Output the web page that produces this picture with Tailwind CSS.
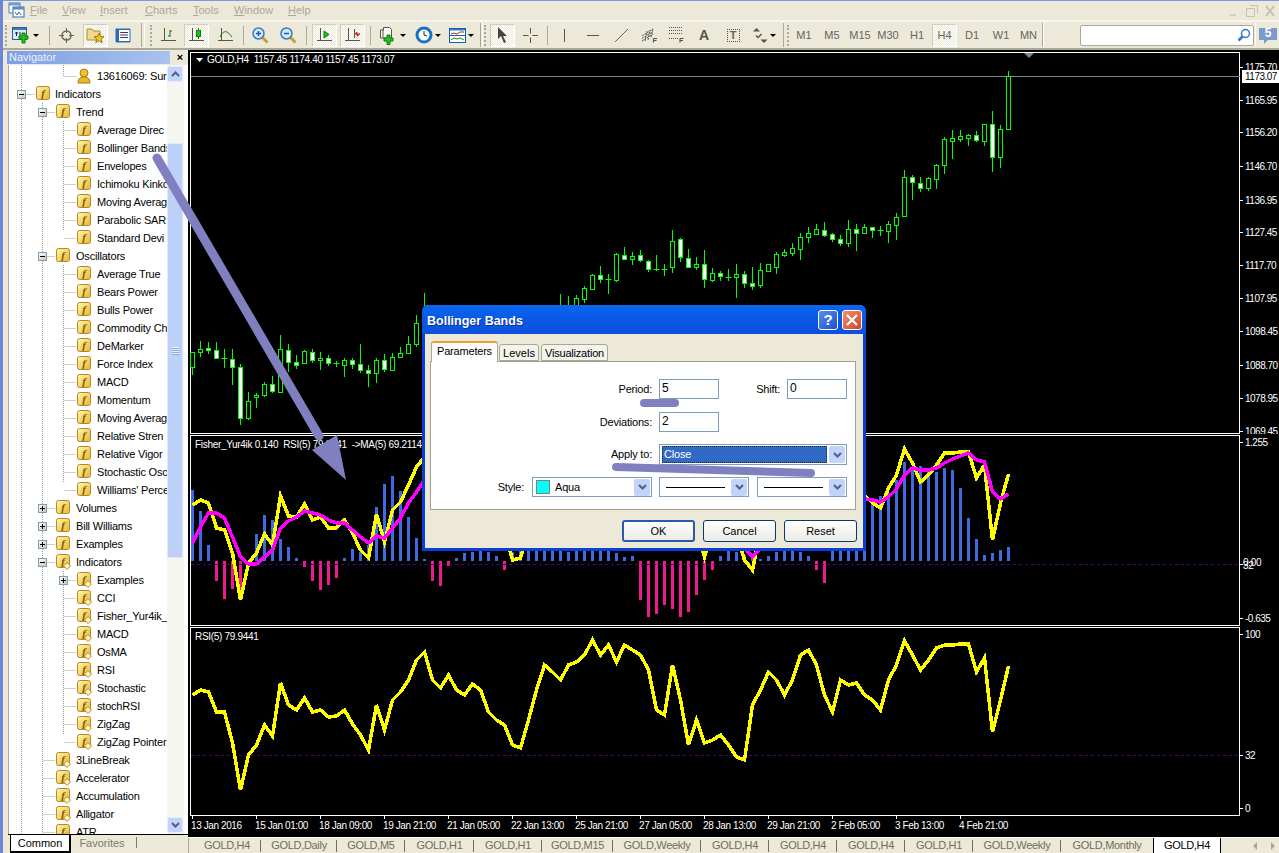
<!DOCTYPE html>
<html lang="en">
<head>
<meta charset="UTF-8">
<title>MetaTrader</title>
<script src="https://cdn.jsdelivr.net/npm/@tailwindcss/browser@4"></script>
</head>
<body class="bg-[#ece9d8]">
<svg width="0" height="0" class="absolute">
  <defs>
    <linearGradient id="gold" x1="0" y1="0" x2="1" y2="1"><stop offset="0" stop-color="#fff7b0"/><stop offset="1" stop-color="#e8b828"/></linearGradient>
    <linearGradient id="box" x1="0" y1="0" x2="1" y2="1"><stop offset="0" stop-color="#ffffff"/><stop offset="1" stop-color="#c8c4b0"/></linearGradient>
  </defs>
</svg>
<div class="relative w-[1279px] h-[853px] overflow-hidden bg-[#ece9d8] font-['Liberation_Sans',sans-serif] text-[11px] text-black flex">
  <!-- window edge -->
  <div class="w-[3px] h-full bg-[#6f85d8] shrink-0"></div>
  <div class="flex-1 flex flex-col min-w-0">
    <!-- Menu -->
    <div class="h-[22px] shrink-0 border-t border-[#7b9ae0] border-b-2 border-b-[#f6f5ef] flex items-center text-[#aca899] relative">
      <svg class="ml-[5px] w-[17px] h-[17px]" viewBox="0 0 17 17"><rect x="1" y="1" width="11" height="10" fill="#fff" stroke="#4d7cc0"/><rect x="1" y="1" width="11" height="2.5" fill="#6f9ad8"/><rect x="5" y="5" width="11" height="10" fill="#fff" stroke="#3a6ab0"/><rect x="5" y="5" width="11" height="2.5" fill="#5a88cc"/><path d="M7 10l2 3 2-3 2 3" fill="none" stroke="#3a6ab0"/></svg>
      <span class="ml-[5px] w-[32px]"><u>F</u>ile</span>
      <span class="w-[38px]"><u>V</u>iew</span>
      <span class="w-[45px]"><u>I</u>nsert</span>
      <span class="w-[48px]"><u>C</u>harts</span>
      <span class="w-[41px]"><u>T</u>ools</span>
      <span class="w-[54px]"><u>W</u>indow</span>
      <span><u>H</u>elp</span>
      <div class="ml-auto mr-[1px] flex gap-[4px] opacity-40 pr-[1px]">
        <svg class="w-[14px] h-[14px]" viewBox="0 0 14 14"><rect x="3" y="10" width="6" height="2" fill="#aca899"/></svg>
        <svg class="w-[14px] h-[14px]" viewBox="0 0 14 14"><path d="M1.500 4.500h8v8h-8zM4.500 1.500h8v8" fill="none" stroke="#8a8878"/></svg>
        <svg class="w-[14px] h-[14px]" viewBox="0 0 14 14"><path d="M3 2l8 10M11 2L3 12" stroke="#8a8878" stroke-width="2"/></svg>
      </div>
    </div>

    <!-- Toolbar -->
    <div class="h-[28px] shrink-0 flex items-center border-b-2 border-b-[#aca899] text-[#66665c] text-[11px]">
      <div class="w-[2px]"></div>
      <div class="w-[3px] h-[21px] border-l-2 border-dotted border-[#aca899]"></div>
      <div class="w-[34px] flex items-center justify-center gap-[2px]">
        <svg class="w-[19px] h-[17px]" viewBox="0 0 19 17"><rect x=".5" y=".5" width="14" height="12" fill="#dbe8fa" stroke="#2a5a9a"/><rect x="1" y="1" width="13" height="2" fill="#3a7ac8"/><path d="M3 6h3M4.500 5v4M8 5v5" stroke="#222" fill="none"/><path d="M10 6h3v3h3v3h-3v4h-3v-4H7V9h3z" fill="#22c022" stroke="#0a800a"/></svg>
        <span class="w-0 h-0 border-x-[3px] border-x-transparent border-t-[3px] border-t-black"></span>
      </div>
      <div class="w-[14px] flex justify-center"><div class="w-px h-[19px] bg-[#aca899]"></div></div>
      <div class="w-[20px] flex justify-center">
        <svg class="w-[15px] h-[15px]" viewBox="0 0 15 15" fill="none" stroke="#66665c"><circle cx="7.500" cy="7.500" r="4.500" stroke-width="1.500"/><path d="M7.500 0v5M7.500 10v5M0 7.500h5M10 7.500h5"/></svg>
      </div>
      <div class="w-[7px]"></div>
      <div class="w-[25px] h-[23px] flex items-center justify-center border border-[#d0cdbc] border-r-white border-b-white bg-[repeating-conic-gradient(#ece9d8_0_25%,#ffffff_0_50%)] bg-[length:2px_2px]">
        <svg class="w-[19px] h-[17px]" viewBox="0 0 19 17"><path d="M1 2h5l1.500 2H14v9H1z" fill="#f4d98a" stroke="#a88a3a"/><path d="M13 6l1.500 3.500 3.500.3-2.700 2.300.9 3.600-3.200-2-3.200 2 .9-3.600L8 9.800l3.500-.3z" fill="#f0c030" stroke="#a07a10"/></svg>
      </div>
      <div class="w-[30px] flex justify-center">
        <svg class="w-[16px] h-[15px]" viewBox="0 0 16 15"><rect x=".5" y=".5" width="15" height="14" rx="1" fill="#2a6ab8"/><rect x="4" y="2" width="10.500" height="11" fill="#fff"/><path d="M6 4.500h7M6 7h7M6 9.500h7" stroke="#3a3a6a"/><path d="M5 4.500h1M5 7h1M5 9.500h1" stroke="#d03030"/></svg>
      </div>
      <div class="w-[9px] flex justify-center gap-[2px]"><div class="w-px h-[24px] bg-[#aca899]"></div><div class="w-px h-[24px] bg-white"></div></div>
      <div class="w-[3px]"></div>
      <div class="w-[3px] h-[21px] border-l-2 border-dotted border-[#aca899]"></div>
      <div class="w-[31px] flex justify-center">
        <svg class="w-[15px] h-[15px]" viewBox="0 0 15 15" fill="none"><path d="M3.500 0v12.500M0 12.500h15" stroke="#55554b"/><path d="M9 2v7M7 8h2M9 3h2" stroke="#0a800a"/></svg>
      </div>
      <div class="w-[25px] h-[23px] flex items-center justify-center border border-[#d0cdbc] border-r-white border-b-white bg-[repeating-conic-gradient(#ece9d8_0_25%,#ffffff_0_50%)] bg-[length:2px_2px]">
        <svg class="w-[15px] h-[15px]" viewBox="0 0 15 15" fill="none"><path d="M3.500 0v12.500M0 12.500h15" stroke="#55554b"/><path d="M9.500 0v11" stroke="#0a800a"/><rect x="7.500" y="2.500" width="4" height="6" fill="#22c022" stroke="#0a800a"/></svg>
      </div>
      <div class="w-[32px] flex justify-center">
        <svg class="w-[15px] h-[15px]" viewBox="0 0 15 15" fill="none"><path d="M3.500 0v12.500M0 12.500h15" stroke="#55554b"/><path d="M2 9c2-5 5-6 7-5s3 3 5 5" stroke="#0a800a"/></svg>
      </div>
      <div class="w-[4px] flex justify-center"><div class="w-px h-[19px] bg-[#aca899]"></div></div>
      <div class="w-[30px] flex justify-center">
        <svg class="w-[17px] h-[17px]" viewBox="0 0 17 17" fill="none"><path d="M10.500 10.500l5 5" stroke="#c8a030" stroke-width="3"/><circle cx="6.500" cy="6.500" r="5.500" fill="#d4e8fb" stroke="#3a7ac0" stroke-width="1.500"/><path d="M4 6.500h5M6.500 4v5" stroke="#1a5aa8" stroke-width="1.500"/></svg>
      </div>
      <div class="w-[26px] flex justify-center">
        <svg class="w-[17px] h-[17px]" viewBox="0 0 17 17" fill="none"><path d="M10.500 10.500l5 5" stroke="#c8a030" stroke-width="3"/><circle cx="6.500" cy="6.500" r="5.500" fill="#d4e8fb" stroke="#3a7ac0" stroke-width="1.500"/><path d="M4 6.500h5" stroke="#1a5aa8" stroke-width="1.500"/></svg>
      </div>
      <div class="w-[10px] flex justify-center"><div class="w-px h-[19px] bg-[#aca899]"></div></div>
      <div class="w-px"></div>
      <div class="w-[25px] h-[23px] flex items-center justify-center border border-[#d0cdbc] border-r-white border-b-white bg-[repeating-conic-gradient(#ece9d8_0_25%,#ffffff_0_50%)] bg-[length:2px_2px]">
        <svg class="w-[15px] h-[15px]" viewBox="0 0 15 15" fill="none"><path d="M3.500 0v12.500M0 12.500h15" stroke="#55554b"/><path d="M7 3v7l5-3.500z" fill="#22c022" stroke="#0a800a"/></svg>
      </div>
      <div class="w-[3px]"></div>
      <div class="w-[25px] h-[23px] flex items-center justify-center border border-[#d0cdbc] border-r-white border-b-white bg-[repeating-conic-gradient(#ece9d8_0_25%,#ffffff_0_50%)] bg-[length:2px_2px]">
        <svg class="w-[15px] h-[15px]" viewBox="0 0 15 15" fill="none"><path d="M3.500 0v12.500M0 12.500h15M9.500 1v9" stroke="#55554b"/><path d="M15 6H10l2-2v4z" fill="#c03020" stroke="#c03020"/></svg>
      </div>
      <div class="w-[10px] flex justify-center"><div class="w-px h-[19px] bg-[#aca899]"></div></div>
      <div class="w-[35px] flex items-center justify-center gap-[2px]">
        <svg class="w-[19px] h-[19px]" viewBox="0 0 19 19"><path d="M1.500 4h3V1.500h6l2 2V12H1.500z" fill="#fff" stroke="#55554b"/><path d="M4 3v9" stroke="#55554b"/><path d="M8 9h3v3h3v3h-3v3.500H8V15H5v-3h3z" fill="#22c022" stroke="#0a800a"/></svg>
        <span class="w-0 h-0 border-x-[3px] border-x-transparent border-t-[3px] border-t-black"></span>
      </div>
      <div class="w-[35px] flex items-center justify-center gap-[2px]">
        <svg class="w-[18px] h-[18px]" viewBox="0 0 18 18"><circle cx="9" cy="9" r="8.500" fill="#1a70c8"/><circle cx="9" cy="9" r="5.500" fill="#fff"/><path d="M9 5v4l3 1" fill="none" stroke="#223"/></svg>
        <span class="w-0 h-0 border-x-[3px] border-x-transparent border-t-[3px] border-t-black"></span>
      </div>
      <div class="w-[33px] flex items-center justify-center gap-[2px]">
        <svg class="w-[17px] h-[15px]" viewBox="0 0 17 15"><rect x=".5" y=".5" width="16" height="14" fill="#fff" stroke="#1a5aa8"/><rect x="1" y="1" width="15" height="1.500" fill="#3a7ac8"/><path d="M1 7.500h15" stroke="#1a5aa8"/><path d="M2 6l3-1 3 1 3-2 4 0" fill="none" stroke="#a03020"/><path d="M2 12l3-2 3 1 3-1 4 2" fill="none" stroke="#10902a"/></svg>
        <span class="w-0 h-0 border-x-[3px] border-x-transparent border-t-[3px] border-t-black"></span>
      </div>
      <div class="w-[6px] flex justify-center"><div class="w-px h-[24px] bg-[#aca899] mr-px"></div><div class="w-px h-[24px] bg-white"></div></div>
      <div class="w-[3px] h-[21px] border-l-2 border-dotted border-[#aca899]"></div>
      <div class="w-[3px]"></div>
      <div class="w-[25px] h-[23px] flex items-center justify-center border border-[#d0cdbc] border-r-white border-b-white bg-[repeating-conic-gradient(#ece9d8_0_25%,#ffffff_0_50%)] bg-[length:2px_2px]">
        <svg class="w-[12px] h-[16px]" viewBox="0 0 12 16"><path d="M1 0v12l3-3 3 7 2-1-3-6h4z" fill="#444"/></svg>
      </div>
      <div class="w-[30px] flex justify-center">
        <svg class="w-[15px] h-[15px]" viewBox="0 0 15 15" fill="none" stroke="#55554b"><path d="M7.500 0v5.500M7.500 9.500V15M0 7.500h5.500M9.500 7.500H15"/></svg>
      </div>
      <div class="w-[4px] flex justify-center"><div class="w-px h-[19px] bg-[#aca899]"></div></div>
      <div class="w-[30px] flex justify-center"><div class="w-px h-[13px] bg-[#55554b]"></div></div>
      <div class="w-[28px] flex justify-center"><div class="w-[12px] h-px bg-[#55554b]"></div></div>
      <div class="w-[28px] flex justify-center">
        <svg class="w-[13px] h-[13px]" viewBox="0 0 13 13" fill="none" stroke="#66665c"><path d="M0 13L13 0"/></svg>
      </div>
      <div class="w-[28px] flex justify-center">
        <svg class="w-[17px] h-[16px]" viewBox="0 0 17 16" fill="none" stroke="#55554b"><path d="M1 9l11-7M1 11.500l11-7M1 14l11-7M4 14l2-10M7 13l2-10M10 10l2-9" stroke-dasharray="2 1"/><path d="M12.500 11.500h3.500M12.500 11.500v4M12.500 13.500h3" stroke-width="1.200"/></svg>
      </div>
      <div class="w-[27px] flex justify-center">
        <svg class="w-[15px] h-[16px]" viewBox="0 0 15 16" fill="none" stroke="#55554b"><path d="M0 .500h13M0 3.500h13M0 6.500h13M0 11.500h9" stroke-dasharray="1 1"/><path d="M11 11.500h3.500M11 11.500v4M11 13.500h3" stroke-width="1.200"/></svg>
      </div>
      <div class="w-[28px] flex justify-center text-[14px] font-bold text-[#55554b]">A</div>
      <div class="w-[30px] flex justify-center">
        <div class="w-[13px] h-[13px] border border-dotted border-[#55554b] flex items-center justify-center text-[11px] font-bold leading-none">T</div>
      </div>
      <div class="w-[33px] flex items-center justify-center gap-[2px]">
        <svg class="w-[15px] h-[15px]" viewBox="0 0 15 15" fill="#55554b"><path d="M3.500 0l3.500 3.500H0zM11 15l-3.500-3.500h7z"/><path d="M3 7.500l2 2 3.500-3.500" fill="none" stroke="#55554b" stroke-width="1.500"/></svg>
        <span class="w-0 h-0 border-x-[3px] border-x-transparent border-t-[3px] border-t-black"></span>
      </div>
      <div class="w-[4px] flex justify-center"><div class="w-px h-[24px] bg-[#aca899]"></div></div>
      <div class="w-[2px]"></div>
      <div class="w-[3px] h-[21px] border-l-2 border-dotted border-[#aca899]"></div>
      <div class="w-[28px] text-center">M1</div>
      <div class="w-[28px] text-center">M5</div>
      <div class="w-[28px] text-center">M15</div>
      <div class="w-[28px] text-center">M30</div>
      <div class="w-[30px] text-center">H1</div>
      <div class="w-[25px] h-[23px] flex items-center justify-center border border-[#d0cdbc] border-r-white border-b-white bg-[repeating-conic-gradient(#ece9d8_0_25%,#ffffff_0_50%)] bg-[length:2px_2px]">H4</div>
      <div class="w-[30px] text-center">D1</div>
      <div class="w-[28px] text-center">W1</div>
      <div class="w-[27px] text-center">MN</div>
      <div class="w-[2px] flex h-[24px]"><div class="w-px bg-[#aca899]"></div><div class="w-px bg-white"></div></div>
      <div class="w-[36px]"></div>
      <div class="w-[174px] h-[21px] bg-white border border-[#aca899] rounded-[2px] flex items-center justify-end pr-[2px]">
        <svg class="w-[14px] h-[14px]" viewBox="0 0 14 14" fill="none" stroke="#2a78d0"><circle cx="8.500" cy="5.500" r="4" stroke-width="1.500"/><path d="M5.500 8.500L1.500 12.500" stroke-width="2.500"/></svg>
      </div>
      <div class="w-px ml-[1px] h-[24px] bg-white"></div>
      <div class="relative ml-[3px] w-[18px] h-[20px] text-center text-white font-bold text-[12px] leading-[17px]">
        <svg class="absolute left-0 top-0 w-[18px] h-[20px]" viewBox="0 0 18 20"><path d="M0 3h18v12H9l-4 4v-4H0z" fill="#7b9bcf"/></svg>
        <span class="relative">5</span>
      </div>
    </div>

    <!-- Main -->
    <div class="flex-1 flex min-h-0">
      <!-- Navigator -->
      <div class="w-[185px] shrink-0 flex flex-col relative">
        <div class="h-px"></div>
        <div class="h-[13px] flex">
          <div class="ml-[4px] w-[163px] bg-linear-to-r from-[#7d9fe2] to-[#a9c2ee] text-[#eef2fb] leading-[13px] pl-[2px]">Navigator</div>
          <div class="ml-[4px] w-[12px] text-center font-bold leading-[13px]">×</div>
        </div>
        <div class="h-px"></div>
        <div class="ml-[5px] flex-1 min-h-0 flex border-l border-[#aca899] bg-white">
          <div id="tree" class="relative w-[158px] overflow-hidden pt-[2px] tracking-[-0.2px]"></div>
          <!-- scrollbar -->
          <div class="w-[17px] bg-[#f6f6f0] flex flex-col pt-[1px] pr-[1px]">
            <div class="h-[16px] rounded-[2px] bg-[#c3d4fb] border border-[#e4ecfd] flex items-center justify-center">
              <svg class="w-[9px] h-[6px]" viewBox="0 0 9 6" fill="none" stroke="#4d6185" stroke-width="2"><path d="M1 5l3.500-3.500L8 5"/></svg>
            </div>
            <div class="h-[61px]"></div>
            <div class="h-[415px] rounded-[2px] bg-[#bcd0f8] border border-[#dfe8fc] flex items-center justify-center">
              <div class="w-[7px] h-[8px] bg-[repeating-linear-gradient(#eef3fe_0_1px,#8ea8d8_1px_2px)]"></div>
            </div>
            <div class="flex-1"></div>
            <div class="h-[16px] rounded-[2px] bg-[#c3d4fb] border border-[#e4ecfd] flex items-center justify-center">
              <svg class="w-[9px] h-[6px]" viewBox="0 0 9 6" fill="none" stroke="#4d6185" stroke-width="2"><path d="M1 1l3.500 3.500L8 1"/></svg>
            </div>
            <div class="h-px"></div>
          </div>
        </div>
        <!-- Common / Favorites -->
        <div class="h-[19px] ml-[5px] flex border-t border-black">
          <div class="ml-[2px] w-[61px] h-[18px] bg-white border-l border-r-2 border-b-2 border-black text-center leading-[16px] text-[11px]">Common</div>
          <div class="ml-[3px] w-[56px] text-center text-[#7a7a6c] leading-[16px] text-[11px]">Favorites</div>
          <div class="w-px h-[11px] mt-[2px] ml-[6px] bg-[#7a7a6c]"></div>
        </div>
      </div>

      <!-- Charts -->
      <div class="flex-1 min-w-0 flex flex-col bg-black">
        <div class="h-[2px] shrink-0"></div>
        <svg id="mainPane" class="block shrink-0" width="1091" height="382" viewBox="188 52 1091 382" font-size="10"></svg>
        <div class="h-px shrink-0"></div>
        <svg id="fisherPane" class="block shrink-0" width="1091" height="191" viewBox="188 435 1091 191" font-size="10"></svg>
        <div class="h-px shrink-0"></div>
        <svg id="rsiPane" class="block shrink-0" width="1091" height="189" viewBox="188 627 1091 189" font-size="10"></svg>
        <svg id="timeAxis" class="block shrink-0" width="1091" height="21" viewBox="188 816 1091 21" font-size="10"></svg>
        <!-- Chart tabs -->
        <div class="h-[16px] shrink-0 border-t border-white bg-[#ece9d8] flex text-[11px] text-[#6e6e5e] leading-[15px] tracking-[-0.3px]">
          <div class="w-[73px] pl-[4px] text-center relative after:absolute after:right-0 after:top-[2px] after:h-[12px] after:w-px after:bg-[#6e6e5e] border-l border-[#aca899]">GOLD,H4</div>
          <div class="w-[76px] text-center relative after:absolute after:right-0 after:top-[2px] after:h-[12px] after:w-px after:bg-[#6e6e5e]">GOLD,Daily</div>
          <div class="w-[68px] text-center relative after:absolute after:right-0 after:top-[2px] after:h-[12px] after:w-px after:bg-[#6e6e5e]">GOLD,M5</div>
          <div class="w-[69px] text-center relative after:absolute after:right-0 after:top-[2px] after:h-[12px] after:w-px after:bg-[#6e6e5e]">GOLD,H1</div>
          <div class="w-[68px] text-center relative after:absolute after:right-0 after:top-[2px] after:h-[12px] after:w-px after:bg-[#6e6e5e]">GOLD,H1</div>
          <div class="w-[71px] text-center relative after:absolute after:right-0 after:top-[2px] after:h-[12px] after:w-px after:bg-[#6e6e5e]">GOLD,M15</div>
          <div class="w-[88px] text-center relative after:absolute after:right-0 after:top-[2px] after:h-[12px] after:w-px after:bg-[#6e6e5e]">GOLD,Weekly</div>
          <div class="w-[68px] text-center relative after:absolute after:right-0 after:top-[2px] after:h-[12px] after:w-px after:bg-[#6e6e5e]">GOLD,H4</div>
          <div class="w-[68px] text-center relative after:absolute after:right-0 after:top-[2px] after:h-[12px] after:w-px after:bg-[#6e6e5e]">GOLD,H4</div>
          <div class="w-[68px] text-center relative after:absolute after:right-0 after:top-[2px] after:h-[12px] after:w-px after:bg-[#6e6e5e]">GOLD,H4</div>
          <div class="w-[68px] text-center relative after:absolute after:right-0 after:top-[2px] after:h-[12px] after:w-px after:bg-[#6e6e5e]">GOLD,H1</div>
          <div class="w-[88px] text-center relative after:absolute after:right-0 after:top-[2px] after:h-[12px] after:w-px after:bg-[#6e6e5e]">GOLD,Weekly</div>
          <div class="w-[92px] text-center">GOLD,Monthly</div>
          <div class="w-[68px] text-center bg-white text-black border-l border-r border-black">GOLD,H4</div>
          <div class="flex-1 flex items-center justify-end pr-[4px] gap-[14px]">
            <span class="w-0 h-0 border-y-[4px] border-y-transparent border-r-[4px] border-r-[#aca899]"></span>
            <span class="w-0 h-0 border-y-[4px] border-y-transparent border-l-[4px] border-l-[#aca899]"></span>
          </div>
        </div>
      </div>
    </div>
  </div>

  <!-- Hand-drawn arrow over the window -->
  <svg class="absolute left-0 top-0 pointer-events-none" width="1279" height="853">
    <path d="M157 158L319 436" stroke="#8080c0" stroke-width="9" stroke-linecap="round"/>
    <path d="M346 480L312 450L337 435z" fill="#8080c0"/>
  </svg>

  <!-- Bollinger Bands dialog -->
  <div class="absolute left-[422px] top-[305px] w-[444px] h-[246px] rounded-t-[6px] border-x-[3px] border-b-[3px] border-[#0a3ed8] bg-[#ece9d8] flex flex-col">
    <div class="h-[29px] -mx-[3px] rounded-t-[6px] bg-linear-to-b from-[#0a66f0] via-[#0a58e6] to-[#0a50dc] flex items-center pl-[5px] pr-[4px] shrink-0">
      <span class="pt-[3px] text-white font-bold text-[12.5px] [text-shadow:1px_1px_0_#0a2ea0]">Bollinger Bands</span>
      <div class="ml-auto w-[20px] h-[20px] rounded-[3px] border border-white bg-linear-to-br from-[#5a8cf0] to-[#1a50d0] text-white font-bold text-[15px] leading-[18px] text-center">?</div>
      <div class="ml-[4px] w-[20px] h-[20px] rounded-[3px] border border-white bg-linear-to-br from-[#f09070] to-[#d04020] flex items-center justify-center">
        <svg class="w-[12px] h-[12px]" viewBox="0 0 12 12" stroke="#fff" stroke-width="2.200"><path d="M1 1l10 10M11 1L1 11"/></svg>
      </div>
    </div>
    <div class="flex items-end pl-[6px] pt-[7px] h-[27px] shrink-0 relative z-10">
      <div class="w-[67px] h-[21px] -mb-px bg-white border-t-2 border-t-[#f0a030] border-x border-x-[#a8a898] rounded-t-[3px] text-center leading-[17px] tracking-[-0.2px]">Parameters</div>
      <div class="w-[40px] h-[17px] ml-px bg-[#f4f3ec] border border-[#a8a898] rounded-t-[3px] text-center leading-[16px]">Levels</div>
      <div class="w-[67px] h-[17px] ml-[2px] bg-[#f4f3ec] border border-[#a8a898] rounded-t-[3px] text-center leading-[16px] tracking-[-0.2px]">Visualization</div>
    </div>
    <div class="ml-[5px] w-[426px] h-[149px] bg-white border border-[#a0a090] pt-[17px] shrink-0 tracking-[-0.2px]">
      <div class="flex items-center h-[20px]">
        <div class="w-[221px] text-right">Period:</div>
        <div class="ml-[7px] w-[60px] h-[20px] border border-[#7f9db9] pl-[2px] leading-[17px] text-[12px]">5</div>
        <div class="w-[61px] text-right">Shift:</div>
        <div class="ml-[7px] w-[60px] h-[20px] border border-[#7f9db9] pl-[2px] leading-[17px] text-[12px]">0</div>
      </div>
      <div class="flex items-center h-[20px] mt-[13px]">
        <div class="w-[221px] text-right">Deviations:</div>
        <div class="ml-[7px] w-[60px] h-[20px] border border-[#7f9db9] pl-[2px] leading-[17px] text-[12px]">2</div>
      </div>
      <div class="flex items-center h-[21px] mt-[12px]">
        <div class="w-[221px] text-right">Apply to:</div>
        <div class="ml-[7px] w-[188px] h-[21px] border border-[#7f9db9] flex items-center pl-[2px] pr-px">
          <div class="flex-1 h-[17px] bg-[#316ac5] text-white border border-dotted border-[#222] leading-[15px] pl-[1px]">Close</div>
          <div class="ml-[2px] w-[16px] h-[17px] rounded-[2px] bg-[#c3d4fb] flex items-center justify-center">
            <svg class="w-[9px] h-[6px]" viewBox="0 0 9 6" fill="none" stroke="#4d6185" stroke-width="2"><path d="M1 1l3.500 3.500L8 1"/></svg>
          </div>
        </div>
      </div>
      <div class="flex items-center h-[20px] mt-[12px]">
        <div class="w-[93px] text-right">Style:</div>
        <div class="ml-[8px] w-[120px] h-[20px] border border-[#7f9db9] flex items-center pl-[3px] pr-px">
          <div class="w-[14px] h-[14px] bg-[#00ffff] border border-[#808080]"></div>
          <div class="ml-[5px] flex-1">Aqua</div>
          <div class="w-[16px] h-[17px] rounded-[2px] bg-[#c3d4fb] flex items-center justify-center">
            <svg class="w-[9px] h-[6px]" viewBox="0 0 9 6" fill="none" stroke="#4d6185" stroke-width="2"><path d="M1 1l3.500 3.500L8 1"/></svg>
          </div>
        </div>
        <div class="ml-[7px] w-[90px] h-[20px] border border-[#7f9db9] flex items-center pl-[6px] pr-px">
          <div class="flex-1 h-px bg-black mr-[6px]"></div>
          <div class="w-[16px] h-[17px] rounded-[2px] bg-[#c3d4fb] flex items-center justify-center">
            <svg class="w-[9px] h-[6px]" viewBox="0 0 9 6" fill="none" stroke="#4d6185" stroke-width="2"><path d="M1 1l3.500 3.500L8 1"/></svg>
          </div>
        </div>
        <div class="ml-[8px] w-[90px] h-[20px] border border-[#7f9db9] flex items-center pl-[6px] pr-px">
          <div class="flex-1 h-px bg-black mr-[6px]"></div>
          <div class="w-[16px] h-[17px] rounded-[2px] bg-[#c3d4fb] flex items-center justify-center">
            <svg class="w-[9px] h-[6px]" viewBox="0 0 9 6" fill="none" stroke="#4d6185" stroke-width="2"><path d="M1 1l3.500 3.500L8 1"/></svg>
          </div>
        </div>
      </div>
    </div>
    <div class="flex justify-end gap-[8px] pr-[6px] mt-[10px]">
      <div class="w-[73px] h-[22px] rounded-[3px] border-2 border-[#2a5ab0] bg-linear-to-b from-white to-[#ecebe4] text-center leading-[18px] text-[11px]">OK</div>
      <div class="w-[73px] h-[22px] rounded-[3px] border border-[#003c74] bg-linear-to-b from-white to-[#ecebe4] text-center leading-[20px] text-[11px]">Cancel</div>
      <div class="w-[73px] h-[22px] rounded-[3px] border border-[#003c74] bg-linear-to-b from-white to-[#ecebe4] text-center leading-[20px] text-[11px]">Reset</div>
    </div>
  </div>
  <!-- Pen marks on the dialog -->
  <svg class="absolute left-0 top-0 pointer-events-none" width="1279" height="853">
    <path d="M644 403H675" stroke="#8080c0" stroke-width="8" stroke-linecap="round"/>
    <path d="M616 467L811 473" stroke="#8080c0" stroke-width="8" stroke-linecap="round"/>
  </svg>
</div>

<script>
  // Navigator tree: [depth, label, icon, box]
  const rows = [
    [2, '13616069: Sur', 'user'],
    [0, 'Indicators', 'f', '-'],
    [1, 'Trend', 'f', '-'],
    [2, 'Average Direc', 'f'], [2, 'Bollinger Bands', 'f'], [2, 'Envelopes', 'f'], [2, 'Ichimoku Kinko', 'f'],
    [2, 'Moving Averag', 'f'], [2, 'Parabolic SAR', 'f'], [2, 'Standard Devi', 'f'],
    [1, 'Oscillators', 'f', '-'],
    [2, 'Average True', 'f'], [2, 'Bears Power', 'f'], [2, 'Bulls Power', 'f'], [2, 'Commodity Ch', 'f'],
    [2, 'DeMarker', 'f'], [2, 'Force Index', 'f'], [2, 'MACD', 'f'], [2, 'Momentum', 'f'], [2, 'Moving Averag', 'f'],
    [2, 'Relative Stren', 'f'], [2, 'Relative Vigor', 'f'], [2, 'Stochastic Osc', 'f'], [2, "Williams' Perce", 'f'],
    [1, 'Volumes', 'f', '+'], [1, 'Bill Williams', 'f', '+'], [1, 'Examples', 'f', '+'],
    [1, 'Indicators', 'd', '-'],
    [2, 'Examples', 'd', '+'],
    [2, 'CCI', 'd'], [2, 'Fisher_Yur4ik_', 'd'], [2, 'MACD', 'd'], [2, 'OsMA', 'd'], [2, 'RSI', 'd'],
    [2, 'Stochastic', 'd'], [2, 'stochRSI', 'd'], [2, 'ZigZag', 'd'], [2, 'ZigZag Pointer', 'd'],
    [1, '3LineBreak', 'd'], [1, 'Accelerator', 'd'], [1, 'Accumulation', 'd'], [1, 'Alligator', 'd'], [1, 'ATR', 'd']
  ];

  function treeIcon(kind) {
    if (kind === 'user') {
      return '<svg class="w-[14px] h-[16px] block" viewBox="0 0 14 16"><circle cx="7" cy="5" r="4" fill="#f0c030" stroke="#a87a18"/><path d="M1 15c0-5 3-6 6-6s6 1 6 6z" fill="#e8b828" stroke="#a87a18"/></svg>';
    }
    const gem = kind === 'd' ? '<path d="M11 8.500l3.500 3.500-3.500 3.500L7.500 12z" fill="#fff3b8" stroke="#b8862b"/>' : '';
    return '<svg class="w-[15px] h-[16px] block" viewBox="0 0 15 16"><rect x=".5" y=".5" width="13" height="13" rx="2" fill="url(#gold)" stroke="#b8862b"/><text x="7" y="11" text-anchor="middle" font-family="Liberation Serif" font-style="italic" font-weight="700" font-size="11" fill="#7a5a10">f</text>' + gem + '</svg>';
  }

  function boxIcon(sign) {
    const bar = sign === '+' ? 'M2 4.500h5M4.500 2v5' : 'M2 4.500h5';
    return '<svg class="block" width="9" height="9" viewBox="0 0 9 9"><rect x=".5" y=".5" width="8" height="8" fill="url(#box)" stroke="#7f9db9"/><path d="' + bar + '" stroke="#000"/></svg>';
  }

  const tree = document.getElementById('tree');
  const boxX = [8, 29, 50];
  const iconX = [27, 47, 68];
  const textX = [46, 67, 88];
  let lines = '<svg class="absolute left-0 top-0" width="158" height="770" fill="none" stroke="#a0a090" stroke-dasharray="1 1">' +
    '<path d="M12.500 0V770M33.500 30V770M54.500 0V12M54.500 40V166M54.500 184V418M54.500 490V670"/>';
  rows.forEach((r, n) => {
    const y = 11.5 + n * 18;
    const vx = boxX[r[0]] + 4.5;
    lines += '<path d="M' + (vx + 1) + ' ' + y + 'H' + (iconX[r[0]] - 1) + '"/>';
  });
  lines += '</svg>';
  tree.innerHTML = lines + rows.map((r) => {
    const box = r[3] ? '<span class="absolute top-[5px]" style="left:' + boxX[r[0]] + 'px">' + boxIcon(r[3]) + '</span>' : '';
    return '<div class="relative h-[18px] whitespace-nowrap leading-[18px]">' + box +
      '<span class="absolute top-[1px] bg-white" style="left:' + iconX[r[0]] + 'px">' + treeIcon(r[2]) + '</span>' +
      '<span class="absolute" style="left:' + textX[r[0]] + 'px">' + r[1] + '</span></div>';
  }).join('');

  // Candles: [bar, high, low, bodyTop, bodyBottom, filled]
  const candles = [
    [0,352,375,352,367,0],[1,341,357,349,352,0],[2,342,354,348,350,1],[3,342,359,350,358,1],[4,349,368,358,358,0],
    [5,349,385,359,367,1],[6,364,425,367,418,1],[7,392,420,401,418,0],[8,393,408,395,397,0],[9,382,397,384,395,0],
    [10,376,393,384,391,1],[11,335,393,349,392,0],[12,344,372,350,362,1],[13,355,369,362,365,1],[14,350,364,351,363,0],
    [15,349,363,352,360,1],[16,352,370,358,360,0],[17,355,366,358,363,1],[18,361,367,363,363,0],[19,358,377,360,365,0],
    [20,358,369,360,364,1],[21,344,373,364,370,1],[22,365,387,370,373,1],[23,358,383,360,373,0],[24,354,372,360,369,1],
    [25,353,371,357,370,0],[26,347,358,353,357,0],[27,336,354,344,353,0],[28,315,347,323,344,0],[29,293,330,310,330,0],
    [46,294,320,310,320,0],[47,296,320,310,320,0],[48,295,320,298,320,0],
    [49,286,303,288,299,0],[50,274,290,275,289,0],[51,266,283,275,279,1],[52,274,294,279,279,0],[53,253,282,254,280,0],
    [54,247,259,255,259,1],[55,252,265,256,259,0],[56,250,262,255,260,1],[57,260,272,261,269,1],[58,255,271,269,269,0],
    [59,264,276,269,269,0],[60,230,273,241,267,0],[61,238,262,239,257,1],[62,249,268,258,267,1],[63,257,270,264,267,0],
    [64,250,288,264,279,1],[65,268,282,273,280,0],[66,271,281,273,276,1],[67,269,281,277,277,0],[68,264,298,274,277,0],
    [69,271,288,274,283,1],[70,267,290,283,286,1],[71,263,288,270,285,0],[72,264,271,264,271,0],[73,252,274,254,267,0],
    [74,249,257,252,255,0],[75,243,256,248,253,0],[76,233,260,237,249,0],[77,227,243,233,237,0],[78,224,235,229,234,0],
    [79,222,237,230,235,1],[80,233,242,234,239,1],[81,235,246,239,243,1],[82,220,247,229,243,0],[83,224,251,229,233,1],
    [84,224,234,227,233,0],[85,227,238,227,230,1],[86,226,236,230,230,0],[87,221,243,224,231,0],[88,213,240,217,225,0],
    [89,170,216,177,216,0],[90,175,200,177,182,1],[91,177,192,183,188,1],[92,177,191,178,188,0],[93,164,189,165,179,0],
    [94,137,174,139,165,0],[95,130,159,138,141,0],[96,130,142,136,139,0],[97,134,146,135,138,0],[98,131,142,135,140,1],
    [99,124,146,124,141,0],[100,111,172,124,157,1],[101,125,168,129,157,0],[102,71,130,76,129,0]
  ];
  const barX = (i) => 192.5 + 8 * i;

  function frame(top, bottom) {
    return '<rect x="190.500" y="' + top + '.500" width="1049" height="' + (bottom - top) + '" fill="none" stroke="#fff"/>';
  }

  function label(x, y, text, fill, spacing) {
    return '<text x="' + x + '" y="' + y + '" fill="' + (fill || '#fff') + '" letter-spacing="' + (spacing || -0.3) + '" xml:space="preserve">' + text + '</text>';
  }

  function axis(items) {
    return items.map((a) =>
      '<path d="M1240 ' + (a[0] + .5) + 'h3" stroke="#fff"/>' + label(1245, a[0] + 4, a[1], '#fff', -0.5)
    ).join('');
  }

  // Main chart
  let main = frame(52, 433);
  main += '<path d="M191 76.500H1240" stroke="#778899"/>';
  main += '<path d="M1024 53h10l-5 5z" fill="#778899"/>';
  candles.forEach((c) => {
    const x = barX(c[0]);
    main += '<path d="M' + x + ' ' + c[1] + 'V' + c[2] + '" stroke="#00ff00"/>';
    if (c[3] === c[4]) {
      main += '<path d="M' + (x - 3) + ' ' + (c[3] + .5) + 'h6" stroke="#00ff00"/>';
    } else {
      main += '<rect x="' + (x - 2) + '" y="' + (c[3] + .5) + '" width="4" height="' + (c[4] - c[3]) + '" fill="' + (c[5] ? '#fff' : '#000') + '" stroke="#00ff00"/>';
    }
  });
  main += '<path d="M196 58h7l-3.500 4z" fill="#fff"/>';
  main += label(207, 63, 'GOLD,H4  1157.45 1174.40 1157.45 1173.07');
  main += axis([[67,'1175.70'],[100,'1165.95'],[132,'1156.20'],[166,'1146.70'],[200,'1136.95'],[232,'1127.45'],[265,'1117.70'],[298,'1107.95'],[331,'1098.45'],[365,'1088.70'],[398,'1078.95'],[431,'1069.45']]);
  main += '<rect x="1242" y="70" width="37" height="13" fill="#fff"/>' + label(1245, 80, '1173.07', '#000', -0.5);
  document.getElementById('mainPane').innerHTML = main;

  // Fisher pane: histogram tops (y) per bar, baseline 561
  const hist = [490,511,545,581,599,589,600,562,534,515,520,539,547,558,567,581,590,585,578,558,549,552,545,507,484,476,491,517,538,559,
    581,586,566,558,553,552,550,552,556,570,552,545,540,540,545,550,548,552,548,540,540,545,550,553,557,556,600,617,614,605,609,617,612,595,580,570,
    556,550,552,555,558,559,556,552,548,545,552,556,570,583,545,540,530,520,510,502,496,493,480,462,468,466,470,472,468,470,488,518,539,555,553,550,547];
  const yellowA = [505,500,503,528,530,553,600,563,553,534,545,496,516,517,504,520,517,528,528,520,533,550,558,514,542,510,502,485,467,457,
    450,460,470,480,490,500,510,520,530,530,560,558,530,500,480,470,470,470,470,470,470,470,470,480,490,490,490,500,510,520,530,530,530,530,557,
    530,520,520,535,560,570,530,510,500,500,500,500,500,500,500,500,500,500,495,495,503,508,488,475,449,463,482,475,465,453,453,452,452,478,465,540,503,474];
  const magentaA = [543,527,513,513,518,537,557,564,564,557,550,528,521,517,511,513,515,520,523,523,530,537,543,536,538,528,518,503,492,480,
    470,470,470,475,480,490,500,510,520,525,530,525,520,510,500,495,490,490,490,490,490,490,490,495,500,505,510,515,520,525,530,530,530,530,530,
    535,540,540,545,548,557,548,530,520,515,510,505,505,505,505,505,505,505,500,499,500,502,497,489,475,468,470,470,468,463,459,456,453,460,462,492,499,494];
  const poly = (vals, color, w) => '<polyline fill="none" stroke="' + color + '" stroke-width="' + w + '" shape-rendering="crispEdges" points="' +
    vals.map((y, i) => barX(i) + ',' + y).join(' ') + '"/>';

  let fisher = frame(435, 625);
  hist.forEach((y, i) => {
    const x = barX(i) - 1.5;
    fisher += y > 561
      ? '<rect x="' + x + '" y="561" width="3" height="' + (y - 561) + '" fill="#f01a8c"/>'
      : '<rect x="' + x + '" y="' + y + '" width="3" height="' + (561 - y) + '" fill="#4169e1"/>';
  });
  fisher += '<path d="M191 564.500H1240" stroke="#4b0082" stroke-dasharray="3 3"/>';
  fisher += poly(yellowA, '#ffff00', 3.5) + poly(magentaA, '#ff00ff', 3.5);
  fisher += label(195, 448, 'Fisher_Yur4ik 0.140  RSI(5) 79.9441  -&gt;MA(5) 69.2114');
  fisher += axis([[442,'1.255'],[618,'-0.635']]);
  fisher += '<path d="M1240 564.500h3" stroke="#fff"/>' + label(1243, 566, '0.00') + label(1243, 569, '32');
  document.getElementById('fisherPane').innerHTML = fisher;

  // RSI pane
  const rsi = [695,690,692,712,712,743,790,755,745,725,736,683,705,710,698,712,710,717,716,710,724,735,750,705,730,700,692,680,660,652,
    680,688,675,690,695,684,690,712,720,725,745,748,720,690,665,672,680,665,662,655,640,655,645,662,645,650,655,670,710,715,665,700,745,720,743,740,735,745,757,760,
    705,690,672,680,695,680,655,650,665,695,712,680,685,683,695,700,710,680,665,641,655,670,660,648,645,645,644,644,672,658,732,700,666];
  let rsiSvg = frame(627, 815);
  rsiSvg += '<path d="M191 755.500H1240" stroke="#4b0082" stroke-dasharray="3 3"/>';
  rsiSvg += poly(rsi, '#ffff00', 3.5);
  rsiSvg += label(195, 640, 'RSI(5) 79.9441');
  rsiSvg += axis([[634,'100'],[755,'32'],[808,'0']]);
  document.getElementById('rsiPane').innerHTML = rsiSvg;

  // Time axis
  const times = ['13 Jan 2016','15 Jan 01:00','18 Jan 09:00','19 Jan 21:00','21 Jan 05:00','22 Jan 13:00','25 Jan 21:00','27 Jan 05:00','28 Jan 13:00','29 Jan 21:00','2 Feb 05:00','3 Feb 13:00','4 Feb 21:00'];
  document.getElementById('timeAxis').innerHTML = times.map((t, i) =>
    '<path d="M' + (192.5 + 64 * i) + ' 816v3" stroke="#fff"/>' + label(191 + 64 * i, 829, t, '#fff', -0.4)
  ).join('');
</script>
</body>
</html>
